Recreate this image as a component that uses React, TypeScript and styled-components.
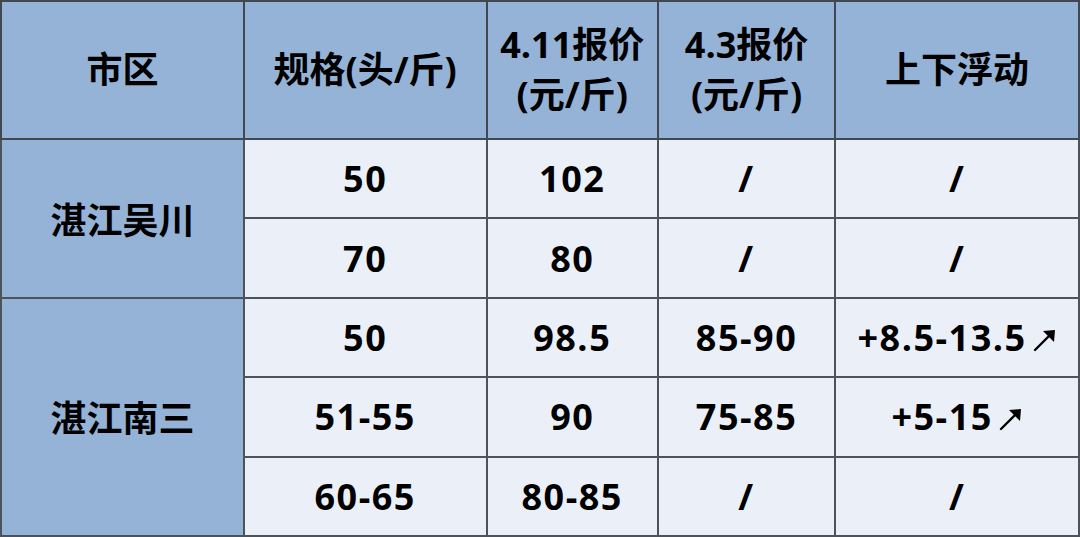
import styled, { createGlobalStyle } from "styled-components";

const GlobalStyle = createGlobalStyle`
  html, body {
    margin: 0;
    padding: 0;
    background: #ffffff;
  }
`;

const Table = styled.table`
  width: 1080px;
  height: 537px;
  border-collapse: collapse;
  table-layout: fixed;
  font-family: "Open Sans", "Noto Sans CJK SC", sans-serif;
  font-weight: 700;
  font-size: 36px;
  color: #000;
`;

const Col = styled.col<{ w: number }>`
  width: ${(props) => props.w}px;
`;

const HeadCell = styled.th`
  height: 136px;
  background: #95b3d7;
  border: 2px solid #414851;
  text-align: center;
  vertical-align: middle;
  line-height: 50px;
  font-weight: 700;
  padding: 0;
`;

const Cell = styled.td<{ district?: boolean }>`
  background: ${(props) => (props.district ? "#95b3d7" : "#ebf0f8")};
  border: 2px solid #4c535b;
  text-align: center;
  vertical-align: middle;
  padding: 0;
  height: 77px;
  white-space: nowrap;
  letter-spacing: ${(props) => (props.district ? "0" : "1.5px")};
`;

const Arrow = styled.svg`
  width: 24px;
  height: 24px;
  margin-left: 6px;
  vertical-align: -1px;
`;

const UpArrow = () => (
  <Arrow viewBox="0 0 24 24">
    <line x1="2" y1="22" x2="19" y2="5" stroke="#000" strokeWidth="2.4" strokeLinecap="round" />
    <path d="M10 3 L22 2 L21 14 Z" fill="#000" />
  </Arrow>
);

type Row = {
  district?: string;
  span?: number;
  spec: string;
  p411: string;
  p43: string;
  change: string;
  up?: boolean;
};

const rows: Row[] = [
  { district: "湛江吴川", span: 2, spec: "50", p411: "102", p43: "/", change: "/" },
  { spec: "70", p411: "80", p43: "/", change: "/" },
  { district: "湛江南三", span: 3, spec: "50", p411: "98.5", p43: "85-90", change: "+8.5-13.5", up: true },
  { spec: "51-55", p411: "90", p43: "75-85", change: "+5-15", up: true },
  { spec: "60-65", p411: "80-85", p43: "/", change: "/" },
];

const App = () => {
  return (
    <>
      <GlobalStyle />
      <Table>
        <colgroup>
          <Col w={241} />
          <Col w={241} />
          <Col w={170} />
          <Col w={176} />
          <Col w={242} />
        </colgroup>
        <thead>
          <tr>
            <HeadCell>市区</HeadCell>
            <HeadCell>规格(头/斤)</HeadCell>
            <HeadCell>
              4.11报价
              <br />
              (元/斤)
            </HeadCell>
            <HeadCell>
              4.3报价
              <br />
              (元/斤)
            </HeadCell>
            <HeadCell>上下浮动</HeadCell>
          </tr>
        </thead>
        <tbody>
          {rows.map((r, i) => (
            <tr key={i}>
              {r.district && (
                <Cell district rowSpan={r.span}>
                  {r.district}
                </Cell>
              )}
              <Cell>{r.spec}</Cell>
              <Cell>{r.p411}</Cell>
              <Cell>{r.p43}</Cell>
              <Cell>
                {r.change}
                {r.up && <UpArrow />}
              </Cell>
            </tr>
          ))}
        </tbody>
      </Table>
    </>
  );
};

export default App;
